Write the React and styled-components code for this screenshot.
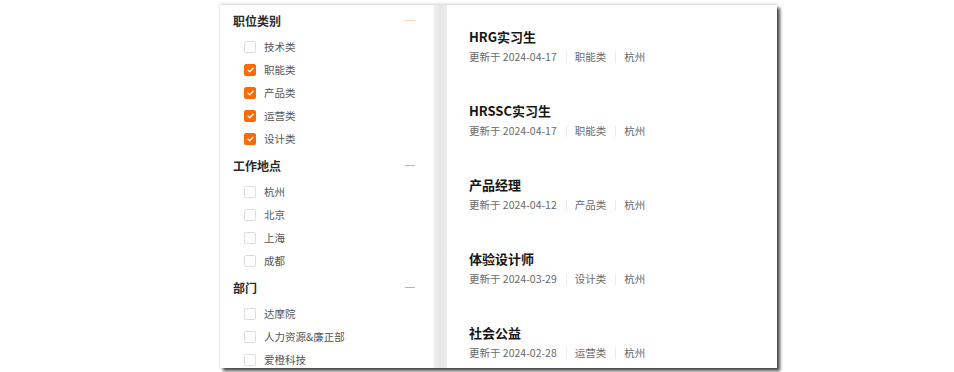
import React from "react";
import styled, { createGlobalStyle } from "styled-components";

const Global = createGlobalStyle`
  html, body { margin: 0; padding: 0; background: #ffffff; }
  body { font-family: "Noto Sans CJK SC", "Noto Sans", sans-serif; }
`;

const Page = styled.div`
  padding: 5px 0 0 220px;
  height: 372px;
  box-sizing: border-box;
`;

const Window = styled.div`
  display: flex;
  width: 557px;
  height: 363px;
  background: #fff;
  overflow: hidden;
  box-shadow: 0 -1px 3px rgba(0, 0, 0, 0.18), 3px 3px 3px rgba(0, 0, 0, 0.7);
`;

const Sidebar = styled.aside`
  width: 214px;
  flex: none;
  padding: 0 19px 0 13px;
  box-sizing: border-box;
  overflow: hidden;
`;

const Divider = styled.div`
  width: 13px;
  flex: none;
  background: linear-gradient(to right, #efefef, #e6e6e6 50%, #ededed);
`;

const Main = styled.main`
  flex: 1;
  padding: 22px 0 0 22px;
  overflow: hidden;
`;

const Section = styled.section`
  display: flex;
  flex-direction: column;
`;

const SectionHead = styled.div`
  height: 30px;
  display: flex;
  align-items: center;
  justify-content: space-between;
`;

const SectionTitle = styled.span`
  font-size: 12px;
  font-weight: 700;
  color: #2b2b2b;
`;

const Collapse = styled.span`
  width: 10px;
  height: 1px;
  background: ${(p) => (p.$light ? "#fcd2b4" : "#f5a574")};
`;

const Options = styled.ul`
  list-style: none;
  margin: 0;
  padding: 0 0 0 11px;
`;

const Option = styled.li`
  height: 23px;
  display: flex;
  align-items: center;
  gap: 8px;
  font-size: 10.5px;
  color: #555;
`;

const Box = styled.span`
  width: 12px;
  height: 12px;
  box-sizing: border-box;
  border-radius: 2px;
  flex: none;
  display: flex;
  align-items: center;
  justify-content: center;
  border: 1px solid ${(p) => (p.$checked ? "#ff6a00" : "#dcdde2")};
  background: ${(p) => (p.$checked ? "#ff6a00" : "#fff")};
`;

const JobCard = styled.article`
  height: 74px;
  display: flex;
  flex-direction: column;
  gap: 2px;
`;

const JobTitle = styled.h3`
  margin: 0;
  font-size: 13px;
  line-height: 20px;
  font-weight: 700;
  color: #151515;
`;

const Meta = styled.div`
  display: flex;
  align-items: center;
  font-size: 10.5px;
  line-height: 16px;
  color: #6a6a6a;
`;

const Sep = styled.span`
  width: 1px;
  height: 11px;
  background: #ebebeb;
  margin: 0 8px 0 9px;
`;

const Check = () => (
  <svg width="7" height="6" viewBox="0 0 7 6">
    <path d="M1 3.2 L2.8 4.8 L6 1.2" fill="none" stroke="#fff" strokeWidth="1.3" strokeLinecap="round" strokeLinejoin="round" />
  </svg>
);

const filters = [
  {
    title: "职位类别",
    light: true,
    options: [
      ["技术类", false],
      ["职能类", true],
      ["产品类", true],
      ["运营类", true],
      ["设计类", true],
    ],
  },
  {
    title: "工作地点",
    options: [
      ["杭州", false],
      ["北京", false],
      ["上海", false],
      ["成都", false],
    ],
  },
  {
    title: "部门",
    options: [
      ["达摩院", false],
      ["人力资源&廉正部", false],
      ["爱橙科技", false],
    ],
  },
];

const jobs = [
  ["HRG实习生", "2024-04-17", "职能类", "杭州"],
  ["HRSSC实习生", "2024-04-17", "职能类", "杭州"],
  ["产品经理", "2024-04-12", "产品类", "杭州"],
  ["体验设计师", "2024-03-29", "设计类", "杭州"],
  ["社会公益", "2024-02-28", "运营类", "杭州"],
];

export default function App() {
  return (
    <>
      <Global />
      <Page>
        <Window>
          <Sidebar>
            {filters.map((f) => (
              <Section key={f.title}>
                <SectionHead>
                  <SectionTitle>{f.title}</SectionTitle>
                  <Collapse $light={f.light} />
                </SectionHead>
                <Options>
                  {f.options.map(([label, checked]) => (
                    <Option key={label}>
                      <Box $checked={checked}>{checked && <Check />}</Box>
                      {label}
                    </Option>
                  ))}
                </Options>
              </Section>
            ))}
          </Sidebar>
          <Divider />
          <Main>
            {jobs.map(([title, date, cat, city]) => (
              <JobCard key={title}>
                <JobTitle>{title}</JobTitle>
                <Meta>
                  更新于 {date}
                  <Sep />
                  {cat}
                  <Sep />
                  {city}
                </Meta>
              </JobCard>
            ))}
          </Main>
        </Window>
      </Page>
    </>
  );
}
